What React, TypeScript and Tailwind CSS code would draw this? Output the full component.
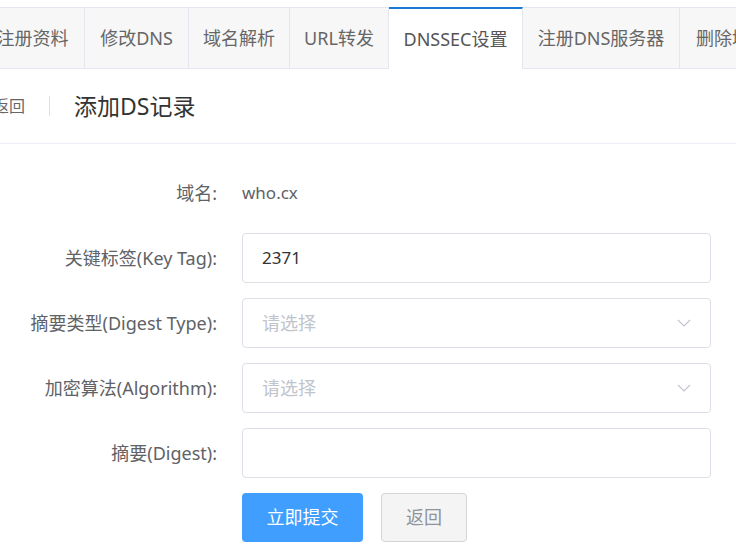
import React from 'react';

const tabs = [
    { label: '注册资料', w: 'w-[104px]' },
    { label: '修改DNS', w: 'w-[104px]' },
    { label: '域名解析', w: 'w-[101px]' },
    { label: 'URL转发', w: 'w-[99px]' },
    { label: 'DNSSEC设置', w: 'w-[134px]', active: true },
    { label: '注册DNS服务器', w: 'w-[157px]' },
];

const Chevron = () => (
    <svg width="14" height="8" viewBox="0 0 14 8" fill="none" stroke="#c0c4cc" strokeWidth="1.2">
        <path d="M1 1l6 6 6-6" />
    </svg>
);

const Row: React.FC<{ label: string; children: React.ReactNode }> = ({ label, children }) => (
    <div className="flex items-center h-[50px]">
        <div className="w-[261px] pr-[25px] text-right text-[18px] text-[#606266] whitespace-nowrap">{label}</div>
        {children}
    </div>
);

const inputBox = 'w-[469px] h-[50px] border border-[#dcdfe6] rounded-[4px] bg-white flex items-center px-[19px]';

export default function App() {
    return (
        <div className="w-[736px] h-[558px] overflow-hidden bg-white" style={{ fontFamily: '"Noto Sans", "Noto Sans CJK SC", sans-serif' }}>
            <div className="-ml-[19px] w-[775px] pt-[7px]">
                {/* tabs */}
                <div className="flex h-[62px] bg-[#f7f7f7] border-t border-b border-[#e4e7ed]">
                    {tabs.map((t) => (
                        <div
                            key={t.label}
                            className={`${t.w} shrink-0 flex items-center justify-center text-[18px] border-r border-[#e4e7ed] ${
                                t.active ? 'bg-white border-t-2 border-t-[#1a7bd6] -mt-px -mb-px text-[#555]' : 'text-[#666]'
                            }`}
                        >
                            {t.label}
                        </div>
                    ))}
                    <div className="flex-1 flex items-center pl-4 text-[18px] text-[#666] whitespace-nowrap">删除域名</div>
                </div>

                {/* header */}
                <div className="flex items-center h-[75px] border-b border-[#ebeef5] pl-[12px]">
                    <span className="text-[16px] text-[#666]">返回</span>
                    <span className="mx-[24px] w-px h-[20px] bg-[#dcdfe6]" />
                    <span className="text-[23px] text-[#333]">添加DS记录</span>
                </div>

                {/* form */}
                <div className="pt-[24px] flex flex-col gap-[15px]">
                    <Row label="域名:">
                        <span className="text-[17px] text-[#606266]">who.cx</span>
                    </Row>
                    <Row label="关键标签(Key Tag):">
                        <div className={`${inputBox} text-[17px] text-[#333]`}>2371</div>
                    </Row>
                    <Row label="摘要类型(Digest Type):">
                        <div className={`${inputBox} justify-between text-[18px] text-[#c0c4cc]`}>
                            <span>请选择</span>
                            <Chevron />
                        </div>
                    </Row>
                    <Row label="加密算法(Algorithm):">
                        <div className={`${inputBox} justify-between text-[18px] text-[#c0c4cc]`}>
                            <span>请选择</span>
                            <Chevron />
                        </div>
                    </Row>
                    <Row label="摘要(Digest):">
                        <div className={inputBox} />
                    </Row>
                    <div className="flex h-[49px] pl-[261px] gap-[18px]">
                        <button className="w-[121px] h-[49px] rounded-[4px] bg-[#409eff] text-white text-[18px]">立即提交</button>
                        <button className="w-[86px] h-[49px] rounded-[4px] bg-[#f4f4f5] border border-[#d3d4d6] text-[#909399] text-[18px]">返回</button>
                    </div>
                </div>
            </div>
        </div>
    );
}
